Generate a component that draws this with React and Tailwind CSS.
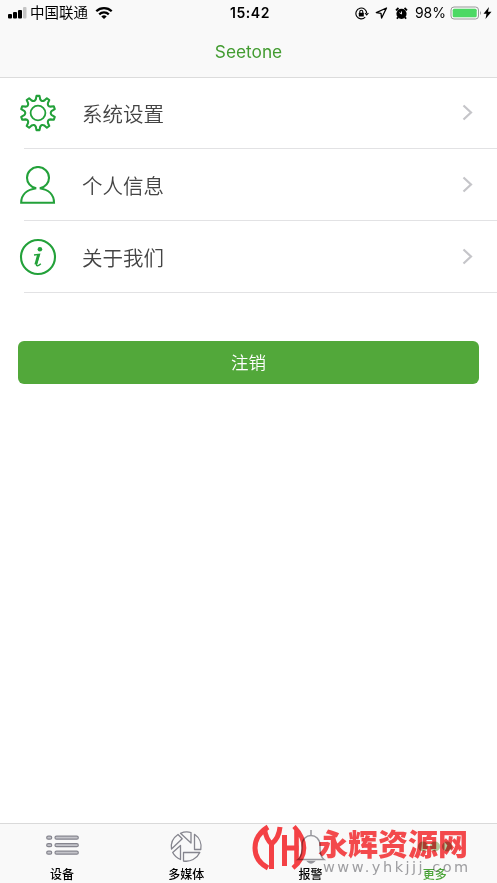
import { Fragment } from "react";

const gearPath = (() => {
  const at = (deg, r) => {
    const a = ((deg - 90) * Math.PI) / 180;
    return `${(19 + r * Math.cos(a)).toFixed(2)} ${(19 + r * Math.sin(a)).toFixed(2)}`;
  };
  let d = `M${at(-5, 17.2)}`;
  for (let i = 0; i < 10; i++) {
    const c = i * 36;
    d += `L${at(c + 5, 17.2)}L${at(c + 9, 14)}Q${at(c + 18, 11.6)} ${at(c + 27, 14)}L${at(c + 31, 17.2)}`;
  }
  return `${d}Z`;
})();

function GearIcon() {
  return (
    <svg width="38" height="38" viewBox="0 0 38 38" fill="none" stroke="#23a13a" strokeWidth="2.1" strokeLinejoin="round">
      <path d={gearPath} />
      <circle cx="19" cy="19" r="7.4" strokeWidth="1.8" />
    </svg>
  );
}

function UserIcon() {
  return (
    <svg width="38" height="38" viewBox="0 0 38 38" fill="none" stroke="#23a13a" strokeWidth="2.1">
      <path d="M17.3 22.300C11.300 21.200 8 16.400 8 11.700a11 10.700 0 0 1 22 0c0 4.700-3.300 9.500-9.300 10.600M17.300 22.300C8.500 23.500 2.200 28.400 2.200 36.800H35C35 28.400 29 23.500 20.700 22.300" />
    </svg>
  );
}

function InfoIcon() {
  return (
    <svg width="38" height="38" viewBox="0 0 38 38" fill="none" stroke="#23a13a">
      <circle cx="19" cy="19" r="17" strokeWidth="2.1" />
      <circle cx="20.9" cy="11.200" r="2.3" fill="#23a13a" stroke="none" />
      <path d="M15 17l5.500-.7-3 10.300c-.4 1.900 1.900 1.600 4.300-.8" strokeWidth="1.4" />
      <path d="M19.300 17l-2.600 9.500" strokeWidth="2.6" />
    </svg>
  );
}

const rows = [
  { label: "系统设置", Icon: GearIcon },
  { label: "个人信息", Icon: UserIcon },
  { label: "关于我们", Icon: InfoIcon },
];

function ListIcon() {
  return (
    <svg width="34" height="32" viewBox="0 0 34 32" fill="#c4c4ca" stroke="#85858e" strokeWidth="1.2">
      {[5.2, 12.7, 20.2].map((y) => (
        <g key={y}>
          <rect x="1.7" y={y} width="5" height="3" rx="1.5" />
          <rect x="10" y={y} width="23.3" height="3" rx="1.5" />
        </g>
      ))}
    </svg>
  );
}

function MediaIcon() {
  return (
    <svg width="34" height="32" viewBox="0 0 34 32" fill="none" stroke="#85858e" strokeWidth="1.3" strokeLinejoin="round">
      <path d="M2.500 18A15 15 0 0 1 9 3.500l4.200 4.300Z" />
      <path d="M11.500 2.300A15 15 0 0 1 22 1.500V12Z" />
      <path d="M25.500 3.300A15 15 0 0 1 31.800 18.500H25.500Z" />
      <path d="M30.800 21.500A15 15 0 0 1 14.500 30V21.500Z" />
      <path d="M11.500 14.500v14A15 15 0 0 1 3.700 21.500Z" />
    </svg>
  );
}

function BellIcon() {
  return (
    <svg width="34" height="34" viewBox="0 0 34 34" fill="none" stroke="#96969c" strokeWidth="1.5">
      <path d="M17 0v5M4 29.500c4-3 4-8 4-14 0-13.500 18-13.500 18 0 0 6 0 11 4 14Z" />
      <path d="M14 31.500q3 3 6 0Z" fill="#96969c" />
    </svg>
  );
}

function MoreIcon() {
  return (
    <svg width="38" height="32" viewBox="0 0 38 32" fill="#b0c899">
      <circle cx="7" cy="15.5" r="5" />
      <circle cx="19" cy="15.5" r="5" />
      <circle cx="31" cy="15.5" r="5" />
    </svg>
  );
}

const tabs = [
  { label: "设备", Icon: ListIcon },
  { label: "多媒体", Icon: MediaIcon },
  { label: "报警", Icon: BellIcon },
  { label: "更多", Icon: MoreIcon, active: true },
];

function StatusBar() {
  return (
    <div className="grid h-[26px] grid-cols-[1fr_auto_1fr] items-center pr-[5px] pl-2 text-black">
      <div className="flex items-center">
        <svg width="19" height="12" viewBox="0 0 19 12">
          <rect x="0" y="7" width="4" height="4.5" rx="1" />
          <rect x="5" y="5" width="4" height="6.5" rx="1" />
          <rect x="10" y="3" width="4" height="8.5" rx="1" />
          <rect x="15" y="0" width="3.5" height="11.5" rx="1" fill="#c5c5c5" />
        </svg>
        <span className="ml-[3px] pt-px text-[14.5px] leading-none">中国联通</span>
        <svg className="ml-[7px]" width="18" height="13" viewBox="0 0 18 13" fill="none" stroke="#000" strokeWidth="2.3">
          <path d="M1.3 4.3a11 11 0 0 1 15.400 0M4.200 7.300a7 7 0 0 1 9.600 0" />
          <path d="M6.300 9.400a4 4 0 0 1 5.400 0L9 12Z" fill="#000" stroke="none" />
        </svg>
      </div>
      <span className="text-[14px] leading-none font-semibold tracking-[0.6px]">15:42</span>
      <div className="flex items-center justify-end">
        <svg width="14" height="13" viewBox="0 0 14 13" fill="none" stroke="#000" strokeWidth="1.1">
          <path d="M10.2 10.200A5.400 5.400 0 1 1 11.700 6.500M10 6l1.700 2 1.700-2" />
          <path d="M4.800 6V4.800a1.500 1.500 0 0 1 3 0V6" />
          <rect x="3.800" y="5.800" width="5" height="3.600" rx=".5" fill="#000" stroke="none" />
        </svg>
        <svg className="ml-[6px]" width="13" height="12" viewBox="0 0 13 12" fill="none" stroke="#000" strokeWidth="1.3" strokeLinejoin="round">
          <path d="M11.500 1L1.300 5.600l4.700.7.600 4.700Z" />
        </svg>
        <svg className="ml-[7px]" width="13" height="13" viewBox="0 0 13 13">
          <circle cx="6.5" cy="6.8" r="5.1" />
          <path d="M1 3.300L3.500 1M12 3.300L9.500 1M3 10.300l-1 1.500M10 10.300l1 1.500" stroke="#000" strokeWidth="1.8" />
          <path d="M6.500 4.500V7l-2-1.300" fill="none" stroke="#fff" strokeWidth=".9" />
        </svg>
        <span className="ml-[7px] text-[14px] leading-none">98%</span>
        <svg className="ml-[4px]" width="33" height="14" viewBox="0 0 33 14">
          <rect x="1" y="1" width="27.5" height="12" rx="3" fill="none" stroke="#999" strokeWidth="1" />
          <rect x="2.7" y="2.7" width="24" height="8.6" rx="1.5" fill="#4cd964" />
          <path d="M30 5q2 2 0 4Z" fill="#999" />
        </svg>
        <svg width="9" height="12" viewBox="0 0 9 12">
          <path d="M6 0L.5 6.800h3L2.500 12 8.500 4.800H5Z" />
        </svg>
      </div>
    </div>
  );
}

function Watermark() {
  return (
    <div className="pointer-events-none absolute top-[823px] left-[251px] flex mix-blend-multiply">
      <svg width="57" height="50" viewBox="0 0 57 50" fill="none" stroke="#fa4246" strokeWidth="5">
        <path d="M17 4Q4 12 4 25T17 45" />
        <path d="M13.500 6Q15 16 20.500 21V46M29 4Q28 15 20.500 21" />
        <path d="M33.500 12v31M33.500 25h14" />
        <path d="M43 3.500Q53 14 53 25T42 45M45.500 6v35" strokeWidth="4.600" />
      </svg>
      <div className="ml-[10px] flex flex-col">
        <span className="h-[36px] text-[30px] leading-[42px] font-black whitespace-nowrap text-[#f94b4e]">永辉资源网</span>
        <span className="ml-[5px] font-['DejaVu_Sans','Noto_Sans',sans-serif] text-[14.5px] leading-4 tracking-[2.5px] text-[#a2a2a5]">www.yhkjjj.com</span>
      </div>
    </div>
  );
}

export default function App() {
  return (
    <div className="relative flex h-[883px] w-[497px] flex-col overflow-hidden bg-white font-[Inter,'Noto_Sans_CJK_SC',sans-serif]">
      <header className="h-[78px] shrink-0 border-b border-[#dcdcdc] bg-[#f9f9f9]">
        <StatusBar />
        <h1 className="text-center text-[17.3px] leading-[51px] text-[#439c31]">Seetone</h1>
      </header>

      <main className="flex-1">
        <ul className="-mt-px">
          {rows.map(({ label, Icon }) => (
            <Fragment key={label}>
              <li className="-mb-px flex h-[72px] items-center pl-[19px]">
                <Icon />
                <span className="ml-[25px] pt-[4px] text-[20.5px] leading-none font-[350] text-[#444]">{label}</span>
                <svg className="mr-6 ml-auto" width="11" height="18" viewBox="0 0 11 18" fill="none" stroke="#c5c5c9" strokeWidth="2.2">
                  <path d="M1.5 1.500L9 8.500l-7.500 7" />
                </svg>
              </li>
              <li className="ml-6 h-px bg-[#e2e2e4]" />
            </Fragment>
          ))}
        </ul>
        <button className="mx-[18px] mt-12 h-[43px] w-[461px] rounded-md bg-[#52a83a] text-[17.5px] leading-none font-[350] text-white">
          注销
        </button>
      </main>

      <nav className="grid h-[60px] shrink-0 grid-cols-4 border-t border-[#dadada] bg-[#f9f9f9]">
        {tabs.map(({ label, Icon, active }) => (
          <div key={label} className="flex flex-col items-center pt-1.5">
            <div className="flex h-[34px] items-center">
              <Icon />
            </div>
            <span className={`mt-1 text-[12px] leading-[14px] font-medium ${active ? "text-[#4ca53a]" : "text-black"}`}>{label}</span>
          </div>
        ))}
      </nav>

      <Watermark />
    </div>
  );
}
